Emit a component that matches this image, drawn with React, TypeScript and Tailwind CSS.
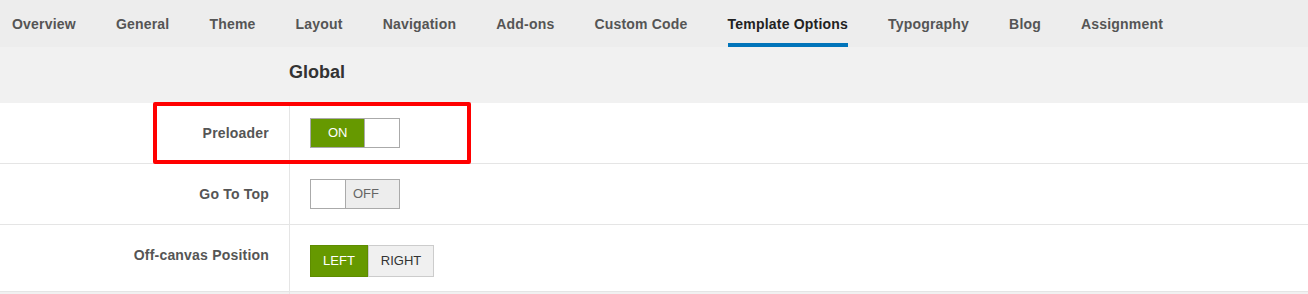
import React from "react";

const tabs = [
  "Overview",
  "General",
  "Theme",
  "Layout",
  "Navigation",
  "Add-ons",
  "Custom Code",
  "Template Options",
  "Typography",
  "Blog",
  "Assignment",
];

export default function App() {
  return (
    <div
      className="relative w-[1308px] h-[294px] overflow-hidden bg-white"
      style={{ fontFamily: '"Liberation Sans", Arial, sans-serif' }}
    >
      {/* Tab bar */}
      <div className="flex h-[47px] bg-[#ededed] pl-3 gap-10">
        {tabs.map((t) => {
          const active = t === "Template Options";
          return (
            <div
              key={t}
              className={
                active
                  ? "h-[47px] pt-[15px] border-b-4 border-[#0174ba] text-[14px] leading-[18px] tracking-[0.2px] font-bold text-[#222] whitespace-nowrap"
                  : "h-[47px] pt-[15px] border-b-4 border-transparent text-[14px] leading-[18px] tracking-[0.2px] font-bold text-[#555] whitespace-nowrap"
              }
            >
              {t}
            </div>
          );
        })}
      </div>

      {/* Section header */}
      <div className="flex h-[56px] bg-[#f1f1f1]">
        <div className="w-[289px] shrink-0" />
        <div className="pt-[13px] text-[18px] leading-[24px] font-bold text-[#333]">
          Global
        </div>
      </div>

      {/* Row 1: Preloader */}
      <div className="flex h-[61px] border-b border-[#e5e5e5]">
        <div className="w-[289px] shrink-0 pr-5 pt-[20px] text-right text-[14px] leading-[20px] tracking-[0.2px] font-bold text-[#555]">
          Preloader
        </div>
        <div className="flex-1 border-l border-[#e5e5e5] pl-5 pt-[15px]">
          <div className="flex w-[90px] h-[30px] border border-[#aaa] text-[13px] leading-[28px]">
            <div className="w-[53px] bg-[#669900] text-white pl-[17px]">ON</div>
            <div className="flex-1 border-l border-[#aaa] bg-white" />
          </div>
        </div>
      </div>

      {/* Row 2: Go To Top */}
      <div className="flex h-[61px] border-b border-[#e5e5e5]">
        <div className="w-[289px] shrink-0 pr-5 pt-[20px] text-right text-[14px] leading-[20px] tracking-[0.2px] font-bold text-[#555]">
          Go To Top
        </div>
        <div className="flex-1 border-l border-[#e5e5e5] pl-5 pt-[15px]">
          <div className="flex w-[90px] h-[30px] border border-[#aaa] text-[13px] leading-[28px]">
            <div className="w-[34px] bg-white" />
            <div className="flex-1 border-l border-[#aaa] bg-[#ededed] text-[#666] pl-[7px]">
              OFF
            </div>
          </div>
        </div>
      </div>

      {/* Row 3: Off-canvas Position */}
      <div className="flex h-[67px] border-b border-[#e5e5e5]">
        <div className="w-[289px] shrink-0 pr-5 pt-[20px] text-right text-[14px] leading-[20px] tracking-[0.2px] font-bold text-[#555]">
          Off-canvas Position
        </div>
        <div className="flex-1 border-l border-[#e5e5e5] pl-5 pt-[20px]">
          <div className="flex h-[32px] text-[13px] leading-[30px]">
            <div className="w-[58px] border border-[#5e8c00] bg-[#669900] text-white text-center">
              LEFT
            </div>
            <div className="w-[66px] border border-[#ccc] bg-[#f0f0f0] text-[#333] text-center">
              RIGHT
            </div>
          </div>
        </div>
      </div>

      <div className="flex h-[10px] bg-[#f1f1f1]">
        <div className="w-[289px] shrink-0" />
        <div className="flex-1 border-l border-[#e5e5e5]" />
      </div>

      {/* Annotation highlight */}
      <div className="absolute left-[153px] top-[102px] w-[318px] h-[62px] border-4 border-[#ff0000] rounded-[2px] pointer-events-none" />
    </div>
  );
}
